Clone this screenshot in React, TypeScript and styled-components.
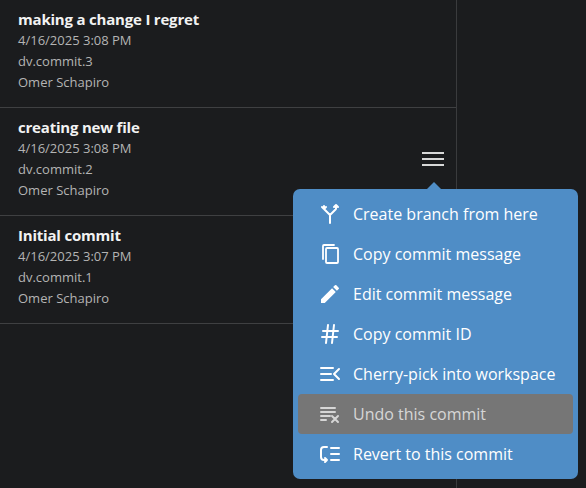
import styled, { createGlobalStyle } from "styled-components";

const Global = createGlobalStyle`
	body { margin: 0; background: #1b1c1e; font-family: "Open Sans", "Liberation Sans", sans-serif; }
`;

const Page = styled.div`
	position: relative;
	width: 586px;
	height: 488px;
	overflow: hidden;
	background: #1b1c1e;
`;

const List = styled.div`
	width: 457px;
	height: 488px;
	border-right: 1px solid #3a3b3d;
	box-sizing: border-box;
`;

const Row = styled.div`
	position: relative;
	height: 108px;
	box-sizing: border-box;
	padding: 8px 18px 0;
	border-bottom: 1px solid #3f4042;
	display: flex;
	flex-direction: column;
`;

const Title = styled.div`
	color: #f2f2f2;
	font-size: 15px;
	font-weight: 700;
	line-height: 22px;
	letter-spacing: -0.2px;
`;

const Meta = styled.div`
	color: #b4b4b4;
	font-size: 13px;
	line-height: 21px;
`;

const MenuButton = styled.div`
	position: absolute;
	right: 12px;
	top: 44px;
	width: 22px;
	display: flex;
	flex-direction: column;
	gap: 4px;
	span { display: block; height: 2px; background: #d8d8d8; }
`;

const Menu = styled.div`
	position: absolute;
	left: 293px;
	top: 189px;
	width: 285px;
	padding: 5px 5px 5px;
	box-sizing: border-box;
	background: #4f8dc6;
	border-radius: 7px;
	&::before {
		content: "";
		position: absolute;
		left: 134px;
		top: -7px;
		border: 7px solid transparent;
		border-top: 0;
		border-bottom-color: #4f8dc6;
	}
`;

const Item = styled.div<{ $active?: boolean }>`
	height: 40px;
	display: flex;
	align-items: center;
	gap: 11px;
	padding-left: 20px;
	border-radius: 4px;
	background: ${(p) => (p.$active ? "#767676" : "transparent")};
	color: ${(p) => (p.$active ? "#d6d6d6" : "#ffffff")};
	font-size: 16px;
	svg { width: 24px; height: 24px; flex: none; }
`;

const ico = { fill: "none", stroke: "currentColor", strokeWidth: 2, strokeLinecap: "round" as const, strokeLinejoin: "round" as const };

const commits = [
	{ title: "making a change I regret", date: "4/16/2025 3:08 PM", id: "dv.commit.3" },
	{ title: "creating new file", date: "4/16/2025 3:08 PM", id: "dv.commit.2", menu: true },
	{ title: "Initial commit", date: "4/16/2025 3:07 PM", id: "dv.commit.1" },
];

export default function App() {
	return (
		<Page>
			<Global />
			<List>
				{commits.map((c) => (
					<Row key={c.id}>
						<Title>{c.title}</Title>
						<Meta>{c.date}</Meta>
						<Meta>{c.id}</Meta>
						<Meta>Omer Schapiro</Meta>
						{c.menu && (
							<MenuButton>
								<span />
								<span />
								<span />
							</MenuButton>
						)}
					</Row>
				))}
			</List>
			<Menu>
				<Item>
					<svg viewBox="0 0 24 24" {...ico}>
						<path d="M12 21v-8l-6-6M12 13l6-6M4 5l2 2 2-2M16 5l2-2 2 2M18 3v4M6 7V4" />
					</svg>
					Create branch from here
				</Item>
				<Item>
					<svg viewBox="0 0 24 24" {...ico} strokeWidth={1.8}>
						<rect x="8" y="6" width="12" height="15" rx="1" />
						<path d="M5 17V4a1 1 0 0 1 1-1h10" />
					</svg>
					Copy commit message
				</Item>
				<Item>
					<svg viewBox="0 0 24 24">
						<path fill="currentColor" d="M3 17.25V21h3.75L17.81 9.94l-3.75-3.75L3 17.25zM20.71 7.04a1 1 0 0 0 0-1.41l-2.34-2.34a1 1 0 0 0-1.41 0l-1.83 1.83 3.75 3.75 1.83-1.83z" />
					</svg>
					Edit commit message
				</Item>
				<Item>
					<svg viewBox="0 0 24 24" {...ico}>
						<path d="M5 9h15M4 15h15M10 3 8 21M16 3l-2 18" />
					</svg>
					Copy commit ID
				</Item>
				<Item>
					<svg viewBox="0 0 24 24" {...ico}>
						<path d="M3 6h12M3 12h10M3 18h12M21 7l-5 5 5 5" />
					</svg>
					Cherry-pick into workspace
				</Item>
				<Item $active>
					<svg viewBox="0 0 24 24" {...ico}>
						<path d="M3 6h14M3 10h14M3 14h9M3 18h5M14 14l6 6M20 14l-6 6" />
					</svg>
					Undo this commit
				</Item>
				<Item>
					<svg viewBox="0 0 24 24" {...ico}>
						<path d="M13 6h8M13 12h8M13 18h8M9 5H6a3 3 0 0 0-3 3v7a3 3 0 0 0 3 3h3M7 16l2 2-2 2" />
					</svg>
					Revert to this commit
				</Item>
			</Menu>
		</Page>
	);
}
